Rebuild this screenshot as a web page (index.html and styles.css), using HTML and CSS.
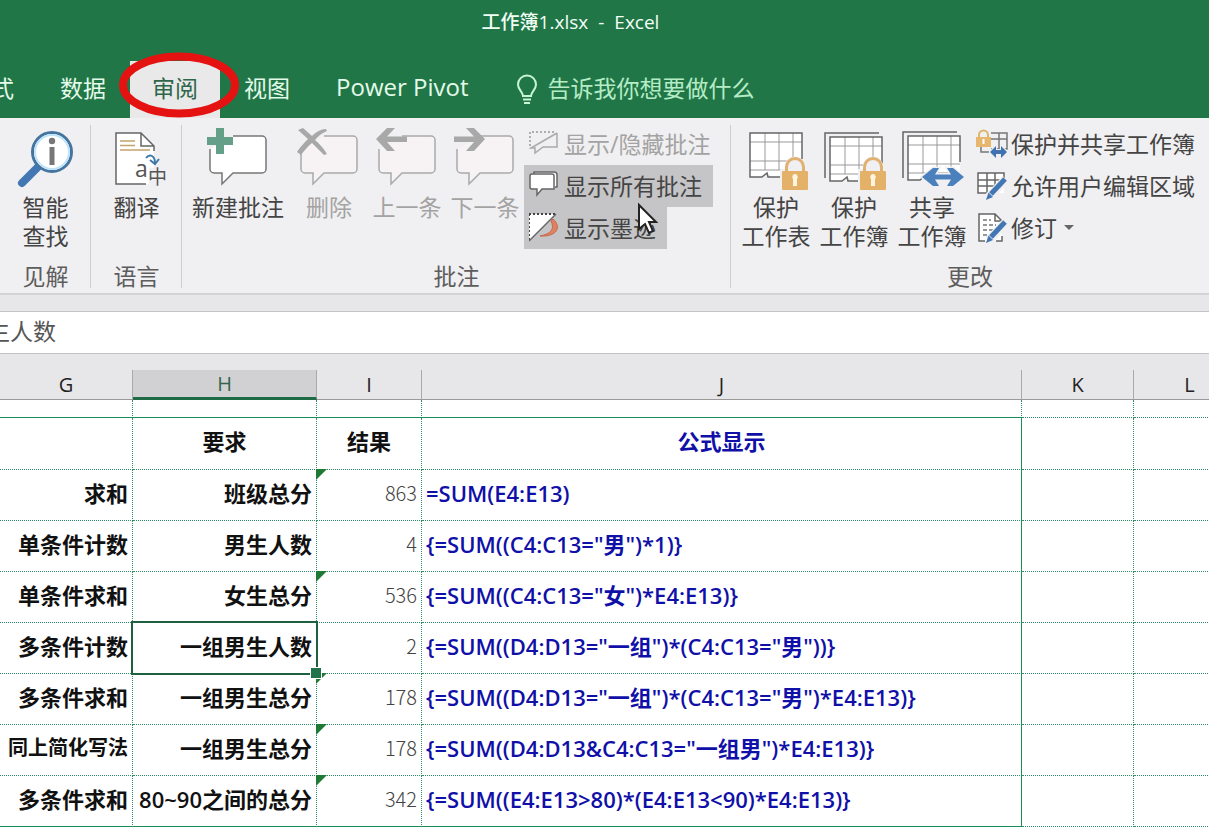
FILE: index.html
```
<!DOCTYPE html>
<html lang="zh-CN">
<head>
<meta charset="utf-8">
<title>工作簿1.xlsx - Excel</title>
<link rel="stylesheet" href="styles.css">
</head>
<body>
<svg class="defs" width="0" height="0" aria-hidden="true">
  <defs>
    <g id="bubble"><path d="M28 12H57a4 4 0 0 1 4 4V45a4 4 0 0 1-4 4H28L17 60V49H9a4 4 0 0 1-4-4V25"/></g>
    <g id="sheet">
      <path class="paper" d="M0 0H52V44H22l-5-4-4 4H0Z"/>
      <path class="rule" d="M15 0V37M29 0V37M43 0V37M0 9H52M0 28H52M0 37H52"/>
      <path class="edge" d="M52 26V0H0V44H12l5-4 1 4H30"/>
    </g>
    <g id="lock">
      <path class="lock-halo" d="M-2 11H3V9C3-5 23-5 23 9V11H28V34H-2Z"/>
      <path class="shackle" d="M4.500 14V9a8.500 8.500 0 0 1 17 0V14"/>
      <rect class="lock-body" x="0" y="13" width="26" height="19" rx="1"/>
      <path class="keyhole" d="M13 16a3 3 0 0 1 2 5V28H11V21a3 3 0 0 1 2-5Z"/>
    </g>
    <g id="pencil">
      <path class="halo" d="M3 23L20 5"/>
      <path class="pen" d="M5 20L19 5"/>
      <path class="nib" d="M0 26L2.500 18.500L7 23Z"/>
    </g>
  </defs>
</svg>
<header class="top">
  <h1 class="title"><span>工作簿1.xlsx</span><span>-</span><span>Excel</span></h1>
  <nav class="tabs">
    <button class="tab">公式</button>
    <button class="tab">数据</button>
    <button class="tab active">审阅
      <svg class="ring" viewBox="0 0 124 68"><ellipse cx="62" cy="34" rx="56" ry="28.500"/></svg>
    </button>
    <button class="tab">视图</button>
    <button class="tab latin">Power Pivot</button>
    <button class="tell">
      <svg width="22" height="32" viewBox="0 0 22 32"><path d="M7 22C7 18 2 16 2 10.500a9 9 0 0 1 18 0C20 16 15 18 15 22Z"/><path class="base" d="M7 25.500H15M8 29H14"/></svg>
      <span>告诉我你想要做什么</span>
    </button>
  </nav>
</header>

<section class="ribbon" aria-label="审阅">
  <div class="group narrow">
    <div class="tools">
      <button class="big">
        <svg class="icon" viewBox="0 0 66 66"><path d="M26 42L9 59" stroke="#4377b4" stroke-width="8" stroke-linecap="round" fill="none"/><circle cx="39" cy="28" r="19.500" fill="#fff" stroke="#45749f" stroke-width="3"/><circle cx="39" cy="28" r="17" fill="none" stroke="#bfe4fa" stroke-width="2"/><circle cx="39" cy="17" r="3.200" fill="#777"/><path d="M36.500 23H41.500V41H36.500Z" fill="#777"/></svg>
        <span>智能<br>查找</span>
      </button>
    </div>
    <h2>见解</h2>
  </div>
  <div class="group narrow">
    <div class="tools">
      <button class="big">
        <svg class="icon" viewBox="0 0 66 66"><path d="M12 9H37L50 22V60H12Z" fill="#fff"/><path d="M42 60H12V9H37L50 22V27M37 9V22H50" fill="none" stroke="#666" stroke-width="1.500"/><path d="M16 17H31M16 21.500H31M16 26H46" stroke="#c4a36a" stroke-width="1.500"/><path d="M42 34C46 29 51 32 51 39M46 36l5 4 4-5" fill="none" stroke="#3d7aa8" stroke-width="2"/><rect x="45" y="44" width="20" height="22" fill="#f0eff1"/><text class="glyph" x="31" y="53" font-size="23">a</text><text class="glyph" x="44" y="60" font-size="19">中</text></svg>
        <span>翻译</span>
      </button>
    </div>
    <h2>语言</h2>
  </div>
  <div class="group comments">
    <div class="tools">
      <button class="big wide">
        <svg class="icon" viewBox="0 0 66 66"><use href="#bubble" fill="#fff" stroke="#777" stroke-width="1.500"/><path d="M11 4H19V13H28V21H19V30H11V21H2V13H11Z" fill="#64a088"/></svg>
        <span>新建批注</span>
      </button>
      <button class="big" disabled>
        <svg class="icon" viewBox="0 0 66 66"><use href="#bubble" fill="#f7f3f5" stroke="#aaa" stroke-width="1.500"/><path d="M2 6L7 4L16 12C20 8 25 5 30 5L31 7C26 9 22 12 19 16C24 20 28 25 31 30L28 31C24 27 20 23 16 19C12 22 8 27 5 31L1 28C4 23 8 19 12 15Z" fill="#a8a8a8"/></svg>
        <span>删除</span>
      </button>
      <button class="big" disabled>
        <svg class="icon" viewBox="0 0 66 66"><use href="#bubble" fill="#f7f3f5" stroke="#aaa" stroke-width="1.500"/><path d="M2 15L13 4H21L13 12.500H33V18H13L21 27H13Z" fill="#a8a8a8"/></svg>
        <span>上一条</span>
      </button>
      <button class="big" disabled>
        <svg class="icon" viewBox="0 0 66 66"><use href="#bubble" fill="#f7f3f5" stroke="#aaa" stroke-width="1.500"/><path d="M33 15L22 4H14L22 12.500H2V18H22L14 27H22Z" fill="#a8a8a8"/></svg>
        <span>下一条</span>
      </button>
      <div class="list">
        <button class="small" disabled>
          <svg viewBox="0 0 32 32"><path d="M1 19V5H27" fill="none" stroke="#999" stroke-width="1.500" stroke-dasharray="2 2"/><path d="M28 6V20H14L6 26V21H2L28 6" fill="none" stroke="#aaa" stroke-width="1.500"/></svg>
          <span>显示/隐藏批注</span>
        </button>
        <button class="small on">
          <svg viewBox="0 0 32 32"><path d="M5 5V3H25Q28 3 28 6V18H26" fill="#fff" stroke="#666" stroke-width="1.500"/><path d="M3 5H23Q25 5 25 7V20H13L8 26V20H3Q1 20 1 18V7Q1 5 3 5Z" fill="#fff" stroke="#666" stroke-width="1.500"/></svg>
          <span>显示所有批注</span>
        </button>
        <button class="small on">
          <svg viewBox="0 0 32 32"><path d="M0 3H27L0 30Z" fill="#fff"/><path d="M0 3H27M0 3V30" stroke="#444" stroke-width="2" stroke-dasharray="2 2"/><path d="M24 8C33 16 28 26 11 25C22 23 26 18 22 10Z" fill="#df8262" stroke="#c8684a"/><path d="M0 30L27 3" stroke="#666" stroke-width="1.500"/></svg>
          <span>显示墨迹</span>
        </button>
        <svg class="cursor" viewBox="0 0 22 32"><path d="M2 2V26L8 21L12 30L16 28L12 19H19Z"/></svg>
      </div>
    </div>
    <h2>批注</h2>
  </div>
  <div class="group changes">
    <div class="tools">
      <button class="big">
        <svg class="icon" viewBox="0 0 66 66"><use href="#sheet" x="7" y="9"/><use href="#lock" x="39" y="34"/></svg>
        <span>保护<br>工作表</span>
      </button>
      <button class="big">
        <svg class="icon" viewBox="0 0 66 66"><path class="edge" d="M4 54V9H58"/><use href="#sheet" x="9" y="13"/><use href="#lock" x="39" y="34"/></svg>
        <span>保护<br>工作簿</span>
      </button>
      <button class="big">
        <svg class="icon" viewBox="0 0 66 66"><path class="edge" d="M4 54V8H58"/><use href="#sheet" x="9" y="12"/><path d="M23 53L34 44H40L36 50.500H52L48 44H54L65 53L54 62H48L52 55.500H36L40 62H34Z" fill="#4a80bb" stroke="#f0eff1" stroke-width="3" paint-order="stroke"/></svg>
        <span>共享<br>工作簿</span>
      </button>
      <div class="list">
        <button class="small">
          <svg viewBox="0 0 32 32"><path d="M15 6H31V22H15M15 12H31M23 6V22M5 20V25H13" fill="none" stroke="#777" stroke-width="1.500"/><path d="M3 11V8a4 4 0 0 1 9 0V11" fill="none" stroke="#deb56f" stroke-width="2"/><rect x="0" y="10" width="15" height="10" fill="#e6b76c"/><path d="M7.500 12V17" stroke="#fff" stroke-width="2"/><path d="M14 25L20 19V23H25V19L31 25L25 31V27H20V31Z" fill="#3f72b2" stroke="#f0eff1" stroke-width="2" paint-order="stroke"/></svg>
          <span>保护并共享工作簿</span>
        </button>
        <button class="small">
          <svg viewBox="0 0 32 32"><path d="M2 4H28V24H2Z" fill="#fff"/><path d="M28 14V4H2V24H13M2 11H28M2 17H20M11 4V23M19 4V18" fill="none" stroke="#666" stroke-width="1.500"/><use href="#pencil" x="10" y="5"/></svg>
          <span>允许用户编辑区域</span>
        </button>
        <button class="small">
          <svg viewBox="0 0 32 32"><path d="M3 3H19L26 10V30H3Z" fill="#fff"/><path d="M9 30H3V3H19L26 10V14M19 3V10H26M20 30H26V25" fill="none" stroke="#666" stroke-width="1.500"/><path d="M7 9H15M7 14H20M7 19H17M7 24H13" stroke="#777" stroke-width="1.500" stroke-dasharray="4 2"/><use href="#pencil" x="10" y="6"/></svg>
          <span>修订</span><i class="caret"></i>
        </button>
      </div>
    </div>
    <h2>更改</h2>
  </div>
</section>

<div class="formula"><input class="formula-input" type="text" aria-label="编辑栏" value="一组男生人数"></div>

<main class="sheet">
  <table class="cells">
    <colgroup><col class="cg"><col class="ch"><col class="ci"><col class="cj"><col class="ck"><col class="cl"></colgroup>
    <thead>
      <tr><th>G</th><th class="picked">H</th><th>I</th><th>J</th><th>K</th><th>L</th></tr>
    </thead>
    <tbody>
      <tr class="gap"><td></td><td></td><td></td><td></td><td></td><td></td></tr>
      <tr class="heads"><td></td><td>要求</td><td>结果</td><td class="code">公式显示</td><td></td><td></td></tr>
      <tr><td>求和</td><td>班级总分</td><td class="num flag">863</td><td class="code">=SUM(E4:E13)</td><td></td><td></td></tr>
      <tr><td>单条件计数</td><td>男生人数</td><td class="num">4</td><td class="code">{=SUM((C4:C13="男")*1)}</td><td></td><td></td></tr>
      <tr><td>单条件求和</td><td>女生总分</td><td class="num flag">536</td><td class="code">{=SUM((C4:C13="女")*E4:E13)}</td><td></td><td></td></tr>
      <tr><td>多条件计数</td><td class="selected">一组男生人数</td><td class="num">2</td><td class="code">{=SUM((D4:D13="一组")*(C4:C13="男"))}</td><td></td><td></td></tr>
      <tr><td>多条件求和</td><td>一组男生总分</td><td class="num flag">178</td><td class="code">{=SUM((D4:D13="一组")*(C4:C13="男")*E4:E13)}</td><td></td><td></td></tr>
      <tr><td class="fit">同上简化写法</td><td>一组男生总分</td><td class="num flag">178</td><td class="code">{=SUM((D4:D13&amp;C4:C13="一组男")*E4:E13)}</td><td></td><td></td></tr>
      <tr class="last"><td>多条件求和</td><td><span class="digits">80~90</span>之间的总分</td><td class="num flag">342</td><td class="code">{=SUM((E4:E13&gt;80)*(E4:E13&lt;90)*E4:E13)}</td><td></td><td></td></tr>
    </tbody>
  </table>
</main>
</body>
</html>
```
FILE: styles.css
```
* { box-sizing: border-box; }

body {
  margin: 0;
  overflow: hidden;
  background: #fff;
  color: #444;
  font-family: "Open Sans", "Noto Sans CJK SC", sans-serif;
  font-size: 23px;
}

button {
  margin: 0;
  padding: 0;
  border: 0;
  background: none;
  color: inherit;
  font: inherit;
  white-space: nowrap;
}

svg { flex: none; }
.defs { position: absolute; }

/* Title bar and tabs */
.top {
  background: #217648;
  color: #e4fbe9;
}

.title {
  display: flex;
  justify-content: center;
  gap: 10px;
  margin: 0;
  padding: 8px 68px 25px 0;
  font-size: 19px;
  font-weight: 500;
  line-height: 28px;
  color: #f2fff5;
}

.tabs {
  display: flex;
  gap: 2px;
  height: 57px;
  margin-left: -54px;
}

.tab {
  position: relative;
  flex: none;
  padding: 0 22px 6px;
}

.tab.latin { font-size: 24px; }

.tab.active {
  background: #e9e9ea;
  color: #2d6649;
}

.ring {
  position: absolute;
  z-index: 2;
  left: -13px;
  top: -10px;
  width: 124px;
  height: 68px;
  fill: none;
  stroke: #e51212;
  stroke-width: 8;
}

.tell {
  display: flex;
  align-items: center;
  gap: 9px;
  padding-left: 24px;
  padding-bottom: 5px;
  color: #b5ecc6;
}

.tell svg { margin-top: 5px; fill: none; stroke: #c8f6d4; stroke-width: 2; }

/* Ribbon */
.ribbon {
  display: flex;
  background: #f0eff1;
  border-bottom: 2px solid #d4d2d5;
}

.group {
  position: relative;
  flex: none;
  padding-top: 5px;
}

.group:not(:last-child)::after {
  content: "";
  position: absolute;
  right: 0;
  top: 7px;
  bottom: 5px;
  width: 1px;
  background: #cfcdd0;
}

.narrow { width: 91px; }
.comments { width: 549px; padding-left: 4px; }
.changes { flex: 1; padding-left: 6px; }
.comments h2 { margin-left: -4px; }
.changes h2 { margin-left: -6px; }

.tools {
  display: flex;
  height: 138px;
}

.narrow .tools { justify-content: center; }

.group h2 {
  margin-block: 0;
  padding-bottom: 2px;
  font-size: 23px;
  font-weight: 400;
  line-height: 30px;
  text-align: center;
  color: #5d5d5d;
}

.big {
  display: flex;
  flex: none;
  flex-direction: column;
  align-items: center;
  gap: 3px;
  width: 78px;
  padding-top: 1px;
  line-height: 29px;
}

.big.wide { width: 104px; }
.big:disabled, .small:disabled { color: #a3a3a3; }
.icon { width: 66px; height: 66px; }

.list {
  position: relative;
  display: flex;
  flex-direction: column;
  align-items: flex-start;
}

.small {
  display: flex;
  align-items: center;
  gap: 3px;
  height: 42px;
  padding: 0 11px 2px 5px;
}

.small svg { width: 32px; height: 32px; }
.small.on { background: #c5c4c6; }

.caret {
  margin-left: 4px;
  border: 5px solid transparent;
  border-top-color: #666;
  border-bottom: 0;
}

.list .cursor {
  position: absolute;
  left: 113px;
  top: 79px;
  width: 22px;
  height: 34px;
  fill: #fff;
  stroke: #222;
  stroke-width: 2;
}

/* Icon parts */
.paper { fill: #fff; }
.rule { fill: none; stroke: #999; stroke-width: 1; }
.edge { fill: none; stroke: #666; stroke-width: 1.5; }
.lock-halo { fill: #f0eff1; }
.lock-body { fill: #e3b168; }
.shackle { fill: none; stroke: #e0b170; stroke-width: 3; }
.keyhole { fill: #fff5df; }
.halo { stroke: #f0eff1; stroke-width: 9; }
.pen { stroke: #4377b4; stroke-width: 5; }
.nib { fill: #4377b4; }
.glyph { fill: #555; }

/* Formula bar */
.formula {
  overflow: hidden;
  height: 60px;
  padding-top: 16px;
  background: #e7e6e8;
}

.formula-input {
  display: block;
  width: calc(100% + 90px);
  height: 43px;
  margin-left: -82px;
  padding: 0 0 5px;
  border: 1px solid #c4c2c5;
  border-width: 1px 0;
  background: #fff;
  color: #555;
  font: inherit;
}

/* Worksheet */
.sheet {
  overflow: hidden;
  padding-top: 15px;
  background: #e7e6e8;
}

.cells {
  table-layout: fixed;
  width: calc(100% + 37px);
  border-spacing: 0;
  background: #fff;
  color: #111;
  font-size: 22px;
}

.cg { width: 133px; }
.ch { width: 184px; }
.ci { width: 105px; }
.ck { width: 112px; }
.cl { width: 112px; }

th {
  height: 30px;
  padding: 0;
  border-right: 1px solid #aaa;
  border-bottom: 1px solid #999;
  background: #e7e6e8;
  color: #222;
  font-size: 20px;
  font-weight: 400;
  line-height: 29px;
}

th.picked {
  border-bottom: 3px solid #1e6b45;
  background: #d1d0d2;
  color: #33664c;
  line-height: 27px;
}

td {
  position: relative;
  height: 51px;
  padding: 0 4px 5px;
  border: 0 dotted #2f9068;
  border-width: 0 1px 1px 0;
  font-weight: 700;
  line-height: 30px;
  text-align: right;
  white-space: nowrap;
}

.gap td { height: 18px; padding: 0; }
.gap td:nth-child(-n+4) { border-bottom: 1px solid #1c8c5a; }
.heads td { height: 52px; text-align: center; }
.last td:nth-child(-n+4) { border-bottom: 1px solid #1c8c5a; }
tr:not(.gap) td:nth-child(4) { border-right: 1px solid #1c8c5a; }

td.num {
  color: #444;
  font-family: "Noto Sans CJK SC", sans-serif;
  font-size: 20px;
  font-weight: 300;
}

td.code {
  color: #1010a8;
  font-weight: 600;
  text-align: left;
}

.heads td.code { text-align: center; }
td.fit { font-size: 20px; }
.digits { font-weight: 600; }

.flag::before {
  content: "";
  position: absolute;
  left: -1px;
  top: -1px;
  width: 11px;
  height: 11px;
  background: #1f7a35;
  clip-path: polygon(0 0, 100% 0, 0 100%);
}

.selected::before {
  content: "";
  position: absolute;
  z-index: 1;
  inset: -2px;
  border: 2px solid #1d6141;
}

.selected::after {
  content: "";
  position: absolute;
  z-index: 2;
  right: -6px;
  bottom: -6px;
  width: 10px;
  height: 10px;
  border: 1px solid #fff;
  background: #21734a;
}
```
